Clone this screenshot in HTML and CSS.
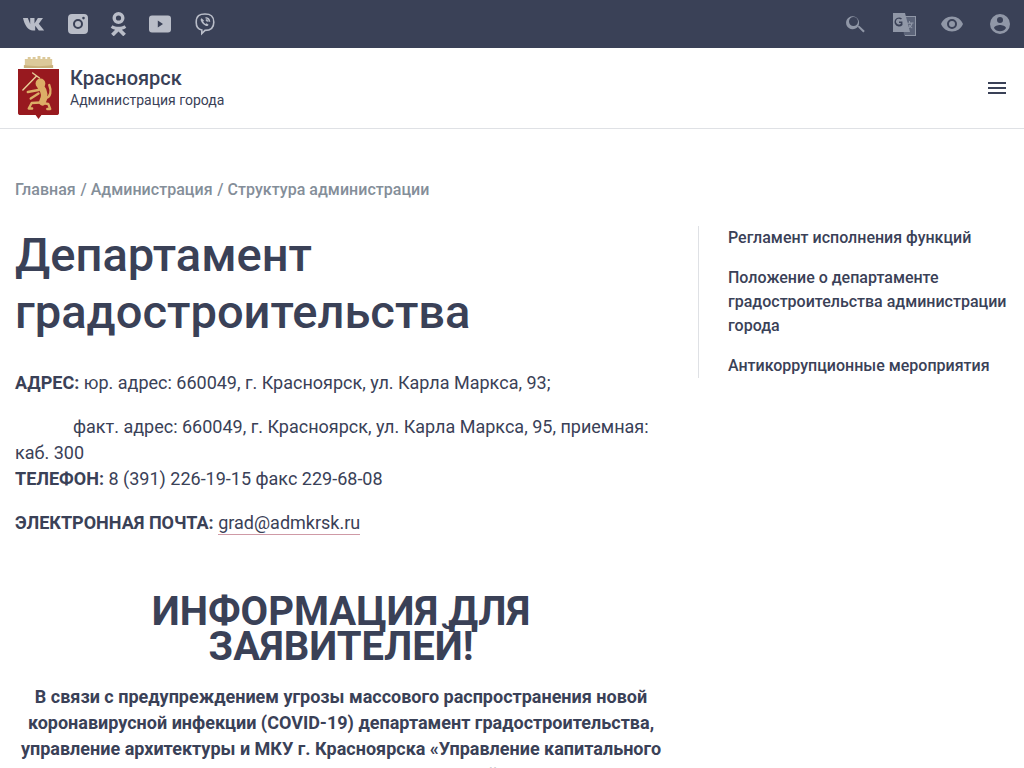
FILE: index.html
```html
<!DOCTYPE html>
<html lang="ru">
<head>
<meta charset="utf-8">
<title>Департамент градостроительства</title>
<link rel="stylesheet" href="styles.css">
</head>
<body>
<header class="topbar">
  <div class="icons icons-left">
    <svg class="ic w24" viewBox="0 0 24 24" width="24" height="24"><path d="M1 6h4.800l2.400 6V6h4.300v5.400L15.900 6H21l-4.200 5.800 5.400 6.700h-5.400l-3.600-4.700v4.700h-2.300C6.200 18.500 2.500 13 1 6z"/></svg>
    <svg class="ic w22" viewBox="0 0 22 24" width="22" height="24"><path fill-rule="evenodd" d="M5 2h12a4 4 0 0 1 4 4v12a4 4 0 0 1-4 4H5a4 4 0 0 1-4-4V6a4 4 0 0 1 4-4zm6 5a5 5 0 1 0 0 10 5 5 0 0 0 0-10zm0 2a3 3 0 1 1 0 6 3 3 0 0 1 0-6zm5.500-4.200a1.300 1.300 0 1 0 0 2.600 1.300 1.300 0 0 0 0-2.600z"/></svg>
    <svg class="ic w17" viewBox="0 0 17 24" width="17" height="24"><path fill-rule="evenodd" d="M8.500 0a6 6 0 1 1 0 12 6 6 0 0 1 0-12zm0 3.400a2.600 2.600 0 1 0 0 5.200 2.600 2.600 0 0 0 0-5.200zM2.500 13.200c1.700 1 3.800 1.500 6 1.500s4.300-.5 6-1.500l1.800 2.600c-1.300 1-2.800 1.600-4.400 2l4 4-2.600 2.500-4.800-4.800-4.800 4.800-2.600-2.500 4-4c-1.600-.4-3.100-1-4.400-2z"/></svg>
    <svg class="ic w24" viewBox="0 0 24 24" width="24" height="24"><path fill-rule="evenodd" d="M4 3.500h16a3 3 0 0 1 3 3v11a3 3 0 0 1-3 3H4a3 3 0 0 1-3-3v-11a3 3 0 0 1 3-3zm5.800 5v7l5.200-3.500z"/></svg>
    <svg class="ic ic-line w22" viewBox="0 0 22 24" width="22" height="24"><path d="M11 2c5.300 0 8.800 1.500 8.800 8.200 0 6.300-3.300 8.200-8.800 8.200l-3.200 3.100v-3.500C3.600 17.100 2.200 14.500 2.200 10.200 2.200 3.500 5.700 2 11 2z"/><path class="fillp" d="M7.600 6.200c-1 .6-1.200 1.500-.6 2.800 1.100 2.400 2.700 3.900 5.100 4.900 1.200.4 2-.1 2.500-1.100l-2-1.500-1 .7c-1.100-.5-1.900-1.300-2.400-2.400l.8-1z"/><path d="M11.500 5.800c2.300.2 3.800 1.700 4 4M11.800 7.800c1 .2 1.600.8 1.800 1.800"/></svg>
  </div>
  <div class="icons icons-right">
    <svg class="ic" viewBox="0 0 24 24" width="24" height="24"><path d="M15.500 14h-.8l-.3-.3A6.500 6.500 0 1 0 14 14.400l.3.3v.8l5 5 1.500-1.500zm-6 0a4.500 4.500 0 1 1 0-9 4.500 4.500 0 0 1 0 9z"/></svg>
    <svg class="ic ic-tr" viewBox="0 0 24 24" width="24" height="24"><path class="tr-back" d="M10 4h13.500v19.500H12z"/><path fill-rule="evenodd" d="M1 1h12l5 19H1zm6 4.500a4.500 4.500 0 1 0 3.500 7.400V9.500H7v1.500h2c-.3 1-1 1.500-2 1.500a2.900 2.900 0 1 1 1.900-5l1.100-1.100A4.400 4.400 0 0 0 7 5.500z"/><path fill-rule="evenodd" d="M12 4h12v20H13v-1h10V5H12.300zM17 9h1v1.500h3.500v1h-1c-.3 1.300-.8 2.300-1.500 3l1.500 1.200-.5.8-1.700-1.300-2.300 1.500-.4-1 1.800-1.300c-.4-.5-.7-1-.9-1.600h1c.2.400.4.700.6.900.5-.6.900-1.300 1.100-2H15v-1h2z"/></svg>
    <svg class="ic" viewBox="0 0 24 24" width="24" height="24"><path d="M12 4.500C7 4.500 2.700 7.600 1 12c1.700 4.400 6 7.500 11 7.500s9.300-3.100 11-7.500c-1.700-4.400-6-7.500-11-7.500zM12 17a5 5 0 1 1 0-10 5 5 0 0 1 0 10zm0-8a3 3 0 1 0 0 6 3 3 0 0 0 0-6z"/></svg>
    <svg class="ic" viewBox="0 0 24 24" width="24" height="24"><path d="M12 2a10 10 0 1 0 0 20 10 10 0 0 0 0-20zm0 3a3 3 0 1 1 0 6 3 3 0 0 1 0-6zm0 14.200a7.200 7.200 0 0 1-6-3.200c0-2 4-3.100 6-3.100s6 1.100 6 3.100a7.200 7.200 0 0 1-6 3.200z"/></svg>
  </div>
</header>
<div class="brandbar">
  <a class="brand" href="#">
    <svg class="crest" viewBox="0 0 42 64" width="41" height="64" preserveAspectRatio="none">
      <path class="crown" d="M7 3h3V1h3v2h2V1h3v2h2V0h3v3h2V1h3v2h2V1h3v2h2v7c-8 1.500-20 1.500-28 0z"/>
      <path class="crown-b" d="M6 9c9 1.500 21 1.500 30 0v3H6z"/>
      <path class="shield" d="M0 13h42v44c0 1.500-1 2-2.500 2H24l-3 4-3-4H2.500C1 59 0 58.500 0 57z"/>
      <g class="lion-lines">
        <path class="staff" d="M5 34L19 20M15 17l7 5"/>
        <path class="thick" d="M23.500 31c3.500 4 4.500 10 1.500 15"/>
        <path d="M21 34L10 36M21 37.500l-8 5M25 47l6 1 2 5h-3M23 46.500l-9 .5-3 5.500h3.500M28.500 42c5-1 6-7 3.500-13"/>
      </g>
      <circle class="lion" cx="23" cy="27.500" r="5"/>
    </svg>
    <span class="brand-text">
      <span class="brand-name">Красноярск</span>
      <span class="brand-sub">Администрация города</span>
    </span>
  </a>
  <button class="burger" type="button" aria-label="Меню"><span></span><span></span><span></span></button>
</div>
<main class="page">
  <nav class="crumbs"><a href="#">Главная</a> <span class="sep">/</span> <a href="#">Администрация</a> <span class="sep">/</span> <a href="#">Структура администрации</a></nav>
  <div class="cols">
    <article class="content">
      <h1>Департамент градостроительства</h1>
      <p><b>АДРЕС:</b> юр. адрес: 660049, г. Красноярск, ул. Карла Маркса, 93;</p>
      <p><span class="indent"></span>факт. адрес: 660049, г. Красноярск, ул. Карла Маркса, 95, приемная: каб. 300<br><b>ТЕЛЕФОН:</b> 8 (391) 226-19-15 факс 229-68-08</p>
      <p><b>ЭЛЕКТРОННАЯ ПОЧТА:</b> <a class="mail" href="#">grad@admkrsk.ru</a></p>
      <h2>ИНФОРМАЦИЯ ДЛЯ ЗАЯВИТЕЛЕЙ!</h2>
      <p class="notice">В связи с предупреждением угрозы массового распространения новой коронавирусной инфекции (COVID-19) департамент градостроительства, управление архитектуры и МКУ г. Красноярска «Управление капитального строительства» приостанавливают личный приём</p>
    </article>
    <aside class="side">
      <a href="#">Регламент исполнения функций</a>
      <a href="#">Положение о департаменте градостроительства администрации города</a>
      <a href="#">Антикоррупционные мероприятия</a>
    </aside>
  </div>
</main>
</body>
</html>
```

FILE: styles.css
```css
* { box-sizing: border-box; }
html, body { margin: 0; padding: 0; height: 768px; overflow: hidden; }
body { font-family: Roboto, "Liberation Sans", sans-serif; color: #3a4157; background: #fff; font-size: 18px; line-height: 26px; }
a { color: inherit; text-decoration: none; }
.topbar { height: 48px; background: #3a4157; display: flex; justify-content: space-between; align-items: center; padding: 0 12px 0 22px; }
.icons { display: flex; gap: 24px; align-items: center; }
.icons-left { gap: 21px; }
.ic { fill: #9097a7; display: block; flex: none; }
.icons-left .ic { fill: #b9bdc8; }
.icons-left .ic-line { fill: none; stroke: #b9bdc8; stroke-width: 1.600; margin-left: 1px; }
.icons-left .ic-line .fillp { fill: #b9bdc8; stroke: none; }
.ic-tr .tr-back { fill: #5c6479; }
.brandbar { height: 81px; border-bottom: 1px solid #dfe1e5; display: flex; justify-content: space-between; align-items: center; padding: 0 18px 0 18px; }
.brand { display: flex; align-items: center; gap: 11px; }
.crest { display: block; }
.crown { fill: #dcc99a; }
.crown-b { fill: #c9b07a; }
.shield { fill: #98191f; }
.lion { fill: #dcae66; }
.lion-lines { fill: none; stroke: #dcae66; stroke-width: 2.400; stroke-linecap: round; stroke-linejoin: round; }
.lion-lines .thick { stroke-width: 7; }
.lion-lines .staff { stroke: #e8cf98; stroke-width: 1.500; }
.brand-text { display: flex; flex-direction: column; margin-bottom: 2px; }
.brand-name { font-size: 20px; line-height: 26px; font-weight: 500; }
.brand-sub { font-size: 14px; line-height: 18px; }
.burger { width: 18px; height: 12px; border: 0; padding: 0; background: none; display: flex; flex-direction: column; justify-content: space-between; }
.burger span { display: block; height: 2px; background: #3a4157; }
.page { padding: 49px 15px 0; }
.crumbs { font-size: 16px; line-height: 24px; font-weight: 500; color: #848e99; letter-spacing: .03px; }
.sep { margin-left: .7px; }
.cols { display: flex; margin-top: 24px; }
.content { width: 652px; flex: none; }
h1 { margin: 0 0 30px; font-size: 47.100px; line-height: 57px; font-weight: 500; }
.content p { margin: 0 0 18px; }
.indent { display: inline-block; width: 58px; }
.mail { padding-bottom: 1px; border-bottom: 1px solid #cf9aa6; }
h2 { margin: 58px 0 0; font-size: 40px; line-height: 35px; font-weight: 700; text-align: center; padding: 0 40px; }
.content p.notice { margin-top: 20px; text-align: center; font-weight: 700; }
.side { margin-left: 31px; width: 311px; flex: none; height: 152px; border-left: 1px solid #dfe1e5; padding-left: 29px; display: flex; flex-direction: column; gap: 16px; font-size: 16px; line-height: 24px; font-weight: 500; }
```
